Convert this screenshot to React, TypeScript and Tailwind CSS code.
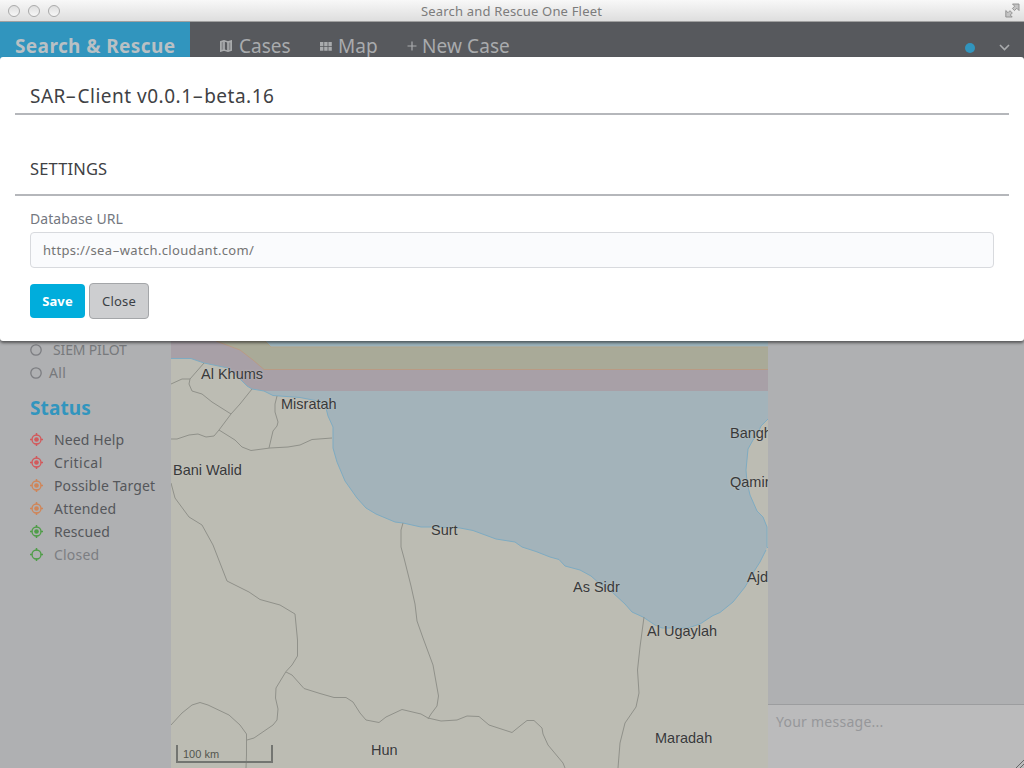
import React from 'react';

const statuses = [
  { label: 'Need Help', color: '#d2595b', on: true, track: 'tracking-[0.12px]' },
  { label: 'Critical', color: '#d2595b', on: true, track: 'tracking-[0.45px]' },
  { label: 'Possible Target', color: '#d08558', on: true, track: 'tracking-[0.12px]' },
  { label: 'Attended', color: '#d08558', on: true, track: 'tracking-[0.2px]' },
  { label: 'Rescued', color: '#4f9d48', on: true, track: 'tracking-[0.1px]' },
  { label: 'Closed', color: '#4f9d48', on: false, track: 'tracking-[0.2px]' },
];

const COAST =
  'M171 358.5 H191 L204 363 L228 368 L241 380 L247 386 L252 389 L264 391 L273 395.5 L300 397.5 L318 401 L326 408 L328 416 L333 427 V448 L337 462 L345 481 L357 498 L366 508 L376 514 L395 522 L403 523 L421 527 L440 527 L460 528 L473 530.5 L496 539 L515 542 L522 547 L536 551.5 L550 557 L559 559.5 L565 566 L580 570 L591 576 L600 584 L612 592 L625 604 L632 612 L643 617 L655 625 L662 628 H688 L700 624 L713 615.5 L720 612.5 L733 602 L745 587 L753 573 L760 562 L766 550';

const BORDERS = [
  'M171 384 L182 379 H190 L204 363',
  'M190 379 L189 384 L192 391 L202 394 L212 402 L231 414',
  'M252 389 L240 404 L231 414 L219 430 L214 436 L206 437 L198 434 L189 435 L177 439 H171',
  'M219 430 L235 440 L242 447 L251 450.5 L270 448 L288 447 L300 445 L312 439.5 L332 438',
  'M277 396 L275 404 V412 L278 422 L277 426 L273 431 L269 448',
  'M171 483 L175 498 L189 517 L202 525 L213 545 L227 581 L249 592 L260 599.5 L280 605 L295 614 L297.500 640 V656 L292 665 L286 671.5 L276 688 L275.500 698 L278 709 L277 720 L273 725 L254 738 L247 740 M171 725 L182 713 L192 705 L200 702.500 L208 705 L229 715 L240 725 L246.500 734 V755 L246 768',
  'M286 672 L292 675 L304 688.500 L320 693.500 L334 697.500 L346 697.500 L353 702 L360 713 L366 720 L379 722.500 L386 717 L402 709.500 L421 714 L428 718 L441 721 L457 720 L467 716 L479 716.500 L489 725 L512 732.500 L520 726 L527 720.500 L534 720.500 L542 728 L543 734 L548 745 L563 763 L565 768',
  'M403 523 L401 530 V547 L404 558 L411 586 L415 604 L417 621 L423 638 L433 665 L438.500 696 L437 706 L431 714 L428 719',
  'M644 617 L640 647 L637.500 670 L639 693 L636 707 L625 723 L620 743 L618 768',
];

const places = [
  { name: 'Al Khums', pos: 'left-[30px] top-[292px]' },
  { name: 'Misratah', pos: 'left-[110px] top-[322px]' },
  { name: 'Bani Walid', pos: 'left-[2px] top-[388px]' },
  { name: 'Surt', pos: 'left-[260px] top-[448px]' },
  { name: 'As Sidr', pos: 'left-[402px] top-[505px]' },
  { name: 'Al Ugaylah', pos: 'left-[476px] top-[549px]' },
  { name: 'Maradah', pos: 'left-[484px] top-[656px]' },
  { name: 'Hun', pos: 'left-[200px] top-[668px]' },
  { name: 'Bangh', pos: 'left-[559px] top-[351px]' },
  { name: 'Qamin', pos: 'left-[559px] top-[400px]' },
  { name: 'Ajd', pos: 'left-[576px] top-[495px]' },
];

function Target({ color, on }: { color: string; on: boolean }) {
  return (
    <svg width="13" height="13" viewBox="0 0 13 13" fill="none" stroke={color} className="shrink-0">
      <circle cx="6.500" cy="6.500" r="4.500" strokeWidth="1.300" />
      <path d="M6.500 0V2.400M6.500 10.600V13M0 6.500H2.400M10.600 6.500H13" strokeWidth="1.500" />
      {on && <circle cx="6.500" cy="6.500" r="2.300" fill={color} stroke="none" />}
    </svg>
  );
}

function Ring() {
  return (
    <svg width="12" height="12" viewBox="0 0 12 12" fill="none" stroke="#7c7d81" strokeWidth="1.300" className="shrink-0">
      <circle cx="6" cy="6" r="5.200" />
    </svg>
  );
}

function TitleBar() {
  return (
    <div className="flex h-[22px] shrink-0 items-center border-b border-[#a0a0a0] bg-gradient-to-b from-[#f8f8f8] to-[#dedede] pl-2 pr-1">
      <div className="flex w-[60px] gap-2">
        {[0, 1, 2].map((i) => (
          <span key={i} className="size-3 rounded-full border border-[#aaaaaa] bg-gradient-to-b from-[#dfdfdf] to-[#f7f7f7]" />
        ))}
      </div>
      <div className="flex-1 pr-[5px] text-center text-[13px] leading-5 tracking-[0.18px] text-[#7c7c7c]">Search and Rescue One Fleet</div>
      <div className="flex w-[60px] justify-end">
        <svg width="15" height="15" viewBox="0 0 15 15" fill="#c4c4c4" stroke="#8c8c8c" strokeWidth=".9">
          <path d="M7.500 1H14V7.500L11.800 5.300L9.500 7.600L7.400 5.500L9.700 3.200Z" />
          <path d="M.8 7.500L3 9.700L5 7.700L7.300 10L5.300 12L7.200 14H.8Z" />
        </svg>
      </div>
    </div>
  );
}

function Header() {
  return (
    <header className="flex h-[48px] shrink-0 items-center bg-[#57595d] text-[19px] leading-6 text-[#a9abad]">
      <div className="flex h-full w-[190px] items-center bg-[#3195be] pl-[15px] text-[19px] font-bold tracking-[0.4px] text-[#b9c0c4]">Search &amp; Rescue</div>
      <div className="flex w-[130px] items-center pl-[30px]">
        <svg width="12" height="12" viewBox="0 0 12 12" fill="none" stroke="#a9abad" strokeWidth="1.600">
          <path d="M.8 1.800L4 .8L8 2L11.200 1V10.200L8 11.200L4 10L.8 11Z" />
          <path d="M.5 1.900L4.600 .6V10.200L.5 11.400ZM7.600 1.900L11.500 .6V10.200L7.600 11.400Z" fill="#a9abad" fillOpacity=".55" stroke="none" />
          <path d="M4 1V10M8 2V11" strokeWidth="1.600" />
        </svg>
        <span className="pl-[7px]">Cases</span>
      </div>
      <div className="flex w-[87px] items-center">
        <svg width="12" height="9" viewBox="0 0 12 9" fill="#a9abad">
          <path d="M0 0H3.400V4H0ZM4.200 0H7.600V4H4.200ZM8.400 0H11.800V4H8.400ZM0 4.800H3.400V8.800H0ZM4.200 4.800H7.600V8.800H4.200ZM8.400 4.800H11.800V8.800H8.400Z" />
        </svg>
        <span className="pl-[6px] tracking-[0.1px]">Map</span>
      </div>
      <div className="flex items-center">
        <svg width="10" height="10" viewBox="0 0 10 10" stroke="#a9abad" strokeWidth="1.200"><path d="M5 .5V9.500M.5 5H9.500" /></svg>
        <span className="pl-[5px] tracking-[0.1px]">New Case</span>
      </div>
      <div className="ml-auto flex items-center gap-[24px] pr-[14px] pt-[3px]">
        <span className="size-[10px] rounded-full bg-[#3195be]" />
        <svg width="11" height="8" viewBox="0 0 11 8" fill="none" stroke="#a9abad" strokeWidth="1.600"><path d="M1 1L5.500 5.500L10 1" /></svg>
      </div>
    </header>
  );
}

function Sidebar() {
  return (
    <aside className="flex w-[171px] shrink-0 flex-col bg-[#afb0b2] pl-[30px] pt-[268px] text-sm text-[#77797c]">
      <div className="flex h-[23px] items-center gap-[11px]">
        <Ring />
        <span className="tracking-[-0.15px]">SIEM PILOT</span>
      </div>
      <div className="flex h-[23px] items-center gap-[7px]">
        <Ring />
        <span className="tracking-[0.4px]">All</span>
      </div>
      <h2 className="mb-[8px] mt-[12px] text-[19px] font-bold leading-[24px] tracking-[0.1px] text-[#3195be]">Status</h2>
      {statuses.map((s) => (
        <div key={s.label} className="flex h-[23px] items-center gap-[11px]">
          <Target color={s.color} on={s.on} />
          <span className={`whitespace-nowrap ${s.track} ${s.on ? 'text-[#55575b]' : 'text-[#7c7e82]'}`}>{s.label}</span>
        </div>
      ))}
    </aside>
  );
}

function MapView() {
  return (
    <main className="relative w-[597px] shrink-0 overflow-hidden bg-[#a3b3ba] font-['Liberation_Sans',sans-serif]">
      <svg width="597" height="698" viewBox="171 70 597 698" fill="none">
        <path d="M171 70H768V391H171Z" fill="#a8a0a7" />
        <path d="M171 70H768V369.500H264L253 360L240 350L216 341Z" fill="#a9aa98" />
        <path d="M171 70H768V347H271L265 341Z" fill="#9db4bd" />
        <path d="M171 341V330H265L265 341Z" fill="#a9aa98" />
        <path d="M216 341L240 350L253 360L264 369.500H768" stroke="#b99b84" />
        <path d="M265 341L271 347H768" stroke="#b2a489" />
        <path d="M252 389L264 391H768V395.500H273Z" fill="#a3b3ba" />
        <path d={`${COAST} L768 545 V768 H171 Z`} fill="#bcbcb3" />
        <path d={COAST} stroke="#7eabc2" />
        <path d="M769 418L761 426L757 435L753 440L748 449L746 470L747 482L750 495L757 511L763 517L767 527V547L770 550Z" fill="#bcbcb3" stroke="#7eabc2" />
        {BORDERS.map((d) => (
          <path key={d} d={d} stroke="#90918a" strokeWidth="1" />
        ))}
      </svg>
      <div className="absolute left-0 top-[2px] size-0">
        {places.map((p) => (
          <span key={p.name} className={`absolute whitespace-nowrap text-[14.5px] leading-5 text-[#38393a] [text-shadow:0_0_2px_#c8c8c3] ${p.pos}`}>{p.name}</span>
        ))}
      </div>
      <div className="absolute bottom-[5px] left-[5px] h-[18px] w-[97px] border-2 border-t-0 border-[#737571] pl-[5px] text-[11px] leading-[18px] text-[#54564f]">100 km</div>
    </main>
  );
}

function SettingsDialog() {
  return (
    <section className="absolute inset-x-0 top-[57px] flex h-[284px] flex-col rounded-[3px] bg-white px-[15px] shadow-[0_2px_3px_rgba(0,0,0,0.5)]">
      <h1 className="h-[58px] border-b-2 border-[#b5b7bb] pl-[15px] pt-[26px] text-[19px] leading-[27px] tracking-[0.5px] text-[#404144]">
        SAR<span className="mx-[2.5px] inline-block scale-x-[1.8]">-</span>Client v0.0.1<span className="mx-[2.5px] inline-block scale-x-[1.8]">-</span>beta.16
      </h1>
      <h2 className="h-[81px] border-b-2 border-[#b5b7bb] pl-[15px] pt-[42px] text-[16.500px] leading-[24px] tracking-[0.15px] text-[#404144]">SETTINGS</h2>
      <div className="flex flex-col px-[15px] pt-[13px]">
        <label className="h-[23px] text-[14px] leading-[20px] tracking-[0.08px] text-[#74787f]">Database URL</label>
        <div className="flex h-[36px] items-center rounded-[4px] border border-[#d8dade] bg-[#fafbfd] px-3 pt-[2px] text-[13px] tracking-[0.33px] text-[#747474]">
          https://sea<span className="mx-[1.5px] inline-block scale-x-[1.7]">-</span>watch.cloudant.com/
        </div>
        <div className="mt-[15px] flex items-center gap-1 text-[13px]">
          <button className="h-[34px] w-[55px] rounded-[4px] bg-[#00addc] pt-[2px] font-bold tracking-[0.1px] text-white">Save</button>
          <button className="h-[36px] w-[60px] rounded-[4px] border border-[#a4a6a9] bg-[#cdced0] pt-[2px] tracking-[0.2px] text-[#3b3f45]">Close</button>
        </div>
      </div>
    </section>
  );
}

export default function App() {
  return (
    <div className="relative flex h-[768px] w-[1024px] flex-col overflow-hidden bg-[#afb0b2] font-['Noto_Sans','Open_Sans',sans-serif]">
      <TitleBar />
      <Header />
      <div className="flex min-h-0 flex-1">
        <Sidebar />
        <MapView />
        <div className="flex flex-1 flex-col">
          <div className="flex-1" />
          <div className="flex h-[64px] items-start justify-between border-t border-[#9c9d9f] bg-[#bbbbbc] pl-2 pt-[7px] text-[14px] leading-5 tracking-[0.25px] text-[#96979a]">
            <span>Your message...</span>
            <svg width="8" height="8" viewBox="0 0 8 8" stroke="#666" className="self-end"><path d="M0 8L8 0M4 8L8 4" /></svg>
          </div>
        </div>
      </div>
      <SettingsDialog />
    </div>
  );
}
